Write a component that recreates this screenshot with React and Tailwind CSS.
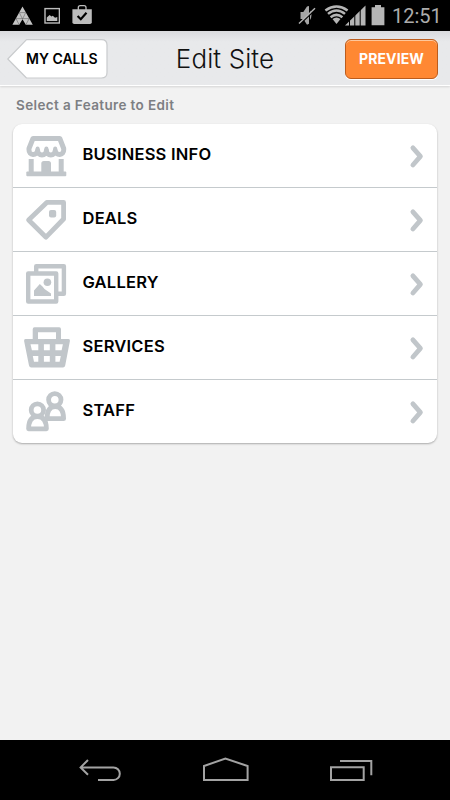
import React from 'react';

const StoreIcon = () => (
  <svg viewBox="0 0 48 48" className="size-12 shrink-0" fill="#c1c6ca">
    <path
      d="M10 6.5H36.8L40.7 16.5V18A4 4 0 0 1 32.2 18.5A4.3 4.3 0 0 1 23.4 18.5A4.3 4.3 0 0 1 14.6 18.5A4 4 0 0 1 6 18V16.5Z"
      fill="none"
      stroke="#c1c6ca"
      strokeWidth="5"
      strokeLinejoin="round"
    />
    <path d="M14.6 16.5v4M23.4 16.5v4M32.2 16.5v4" stroke="#c1c6ca" strokeWidth="4" strokeLinecap="round" />
    <rect x="5.7" y="27" width="5" height="14" />
    <rect x="35.7" y="27" width="5" height="14" />
    <path d="M18.3 41V31.5a2.5 2.5 0 0 1 2.5-2.5h4.7a2.5 2.5 0 0 1 2.5 2.5V41z" />
    <rect x="3.3" y="39.5" width="40" height="4.7" rx="1" />
  </svg>
);

const TagIcon = () => (
  <svg viewBox="0 0 48 48" className="size-12 shrink-0" fill="none" stroke="#c1c6ca" strokeWidth="4.8" strokeLinejoin="round">
    <path d="M5.6 24L23.8 6.4H40.6V23L23 41.2Z" />
    <rect x="26" y="14" width="7.2" height="7.4" rx="2" fill="#c1c6ca" stroke="none" />
  </svg>
);

const GalleryIcon = () => (
  <svg viewBox="0 0 48 48" className="size-12 shrink-0" fill="none" stroke="#c1c6ca" strokeWidth="4.4" strokeLinejoin="round">
    <path d="M13.2 12V6.2H40.9V33.8H35" />
    <rect x="5.2" y="13.5" width="28" height="28" />
    <path d="M11 36V30.5L16.8 24L19.5 26.6L21.5 29L28 33.5V36Z" fill="#c1c6ca" stroke="none" />
    <circle cx="24.4" cy="22.3" r="3.8" fill="#c1c6ca" stroke="none" />
  </svg>
);

const BasketIcon = () => (
  <svg viewBox="0 0 48 48" className="size-12 shrink-0">
    <path
      fillRule="evenodd"
      fill="#c1c6ca"
      d="M11.5 3.3H36.2Q38 3.3 38 5.2V15H45.5Q47.3 15 46.9 17L42.2 41.5Q41.8 43.4 40 43.4H8.2Q6.5 43.4 6 41.5L1.1 17Q.8 15 2.5 15H9.7V5.2Q9.7 3.3 11.5 3.3ZM15 8.3V15H33V8.3ZM7.5 20.3L8.9 26.3H15.3V20.3ZM20.9 20.3V26.3H26.8V20.3ZM32.4 20.3V26.3H38.6L39.9 20.3ZM9.8 32L11 37.8H15.3V32ZM20.9 32V37.8H26.8V32ZM32.4 32V37.8H36.6L37.8 32Z"
    />
  </svg>
);

const StaffIcon = () => (
  <svg viewBox="0 0 48 48" className="size-12 shrink-0" fill="none" stroke="#c1c6ca" strokeWidth="4.8" strokeLinejoin="round">
    <circle cx="31.8" cy="11.8" r="6.2" />
    <path d="M24 30.7Q24 18.6 32.2 18.6Q40.6 18.6 40.6 30.7Z" />
    <circle cx="14.4" cy="22" r="6.2" />
    <path d="M5.6 40.8Q5.6 28.6 14.4 28.6Q23.4 28.6 23.4 40.8Z" />
  </svg>
);

const ChevronIcon = () => (
  <svg viewBox="0 0 16 26" className="h-[26px] w-4" fill="none" stroke="#c1c6ca" strokeWidth="4.8" strokeLinecap="round" strokeLinejoin="round">
    <path d="M3.9 4.8L11.4 13.4L3.9 22" />
  </svg>
);

const features = [
  { label: 'BUSINESS INFO', icon: StoreIcon },
  { label: 'DEALS', icon: TagIcon },
  { label: 'GALLERY', icon: GalleryIcon },
  { label: 'SERVICES', icon: BasketIcon },
  { label: 'STAFF', icon: StaffIcon },
];

const StatusBar = () => (
  <div className="flex h-[31px] shrink-0 justify-between bg-black pr-[9px] pl-3">
    <div className="flex">
      <svg viewBox="0 0 22 31" className="h-[31px] w-[22px]">
        <path d="M10.5 6.5L20.8 24.8H13.8L10.5 19.3L7.2 24.8H.4Z" fill="#c4c4c4" />
        <path d="M7.3 12.6H13.7M4 18.6H17.2M7.3 12.6L10.5 19L13.7 12.6M4 18.6L7.2 24.8M17.2 18.6L13.8 24.8" stroke="#666" strokeWidth=".6" fill="none" />
      </svg>
      <svg viewBox="0 0 16 31" className="ml-[10px] h-[31px] w-4">
        <rect x="1" y="8.6" width="14.4" height="14.4" fill="none" stroke="#bdbdbd" strokeWidth="1.4" />
        <path d="M2.8 21V17.5L5.6 15L7.5 16.5L8.8 15.8L11 17.8L13.3 17V21Z" fill="#bdbdbd" />
      </svg>
      <svg viewBox="0 0 20 31" className="ml-3 h-[31px] w-5">
        <path d="M6.3 10V7.6Q6.3 5.6 8.3 5.6H12Q14 5.6 14 7.6V10" fill="none" stroke="#bdbdbd" strokeWidth="1.3" />
        <path d="M.4 9.3H19.8V22.2Q19.8 24 18 24H2.2Q.4 24 .4 22.2Z" fill="#bdbdbd" />
        <path d="M5.6 16L8.8 19.2L14.5 12.8" fill="none" stroke="#000" strokeWidth="2.2" />
      </svg>
    </div>
    <div className="flex">
      <svg viewBox="0 0 18 31" className="h-[31px] w-[18px]">
        <path d="M2.5 12H5.3L9 6.5L11 6V23.8L9 24.8L5.3 19H2.5ZM12 10.5Q15 15 12 20" fill="#a5a5a5" />
        <path d="M1 24.9L17 10" stroke="#000" strokeWidth="1.3" />
        <path d="M1 23.6L17 8.3" stroke="#b5b5b5" strokeWidth="1.4" />
      </svg>
      <svg viewBox="0 0 42 31" className="ml-2 h-[31px] w-[42px]">
        <path d="M12.5 24L8.5 19Q12.5 16 16.5 19Z" fill="#b5b5b5" />
        <g fill="none" stroke="#b5b5b5" strokeWidth="2.5">
          <path d="M6.6 17.2Q12.5 12.5 18.4 17.2" />
          <path d="M4 13.9Q12.5 7 21 13.9" />
          <path d="M1.4 10.5Q12.5 2.6 23.6 10.5" />
        </g>
        <path d="M21 25.5L41.5 5.5V25.5Z" fill="#b5b5b5" />
        <path d="M25.5 17V26M30.8 12V26M36.2 6V26" stroke="#000" strokeWidth="1" />
      </svg>
      <svg viewBox="0 0 14 31" className="ml-[5px] h-[31px] w-[14px]">
        <path d="M4 5H10V7.3H13.4V25.2H.6V7.3H4Z" fill="#b5b5b5" />
      </svg>
      <span className="ml-[7px] w-[49px] font-['Roboto',sans-serif] text-[20px] leading-[32px] whitespace-nowrap text-[#acacac]">12:51</span>
    </div>
  </div>
);

const Header = () => (
  <header className="flex h-[55px] shrink-0 items-start justify-between border-b border-white bg-linear-to-b from-[#d9dadd] via-[#e8e9eb] via-20% to-[#e8e9eb] pt-2 pr-3 pl-[7px] shadow-[0_1px_2px_rgba(0,0,0,0.12)]">
    <button className="grid h-[40px] w-[101px]">
      <svg viewBox="0 0 101 40" className="col-start-1 row-start-1 h-[40px] w-[101px]">
        <path d="M19.5 .7H94.5Q100 .7 100 6V33.5Q100 39 94.5 39H19.5L.8 20Z" fill="#fff" stroke="#c9cbcd" strokeWidth="1.2" strokeLinejoin="round" />
      </svg>
      <span className="col-start-1 row-start-1 self-center pl-[19px] text-left text-[14px] leading-5 font-semibold whitespace-nowrap text-black">MY CALLS</span>
    </button>
    <h1 className="pt-px pr-[3px] text-[26px] leading-[38px] font-light tracking-[0.1px] text-[#111]">Edit Site</h1>
    <button className="h-[40px] w-[93px] rounded-[6px] border border-[#bb5c1d] bg-[#ff8833] text-[14px] leading-[38px] font-bold tracking-[0.1px] text-white shadow-[inset_0_1px_0_#ffc79b,0_1px_0_#fff]">
      PREVIEW
    </button>
  </header>
);

const NavBar = () => (
  <nav className="flex h-[60px] shrink-0 items-center justify-between bg-black pr-[74px] pl-[76px]">
    <svg viewBox="0 0 48 32" className="h-8 w-12" fill="none" stroke="#a3a3a3" strokeWidth="2">
      <path d="M12 6L4.6 13.4L12 20.8M4.6 13.4H37.5A6.3 6.3 0 0 1 37.5 26H22" />
    </svg>
    <svg viewBox="0 0 48 32" className="h-8 w-12" fill="none" stroke="#a3a3a3" strokeWidth="2">
      <path d="M2 26V12L23.4 4.5L45.6 12V26Z" />
    </svg>
    <svg viewBox="0 0 48 32" className="h-8 w-12" fill="none" stroke="#a3a3a3" strokeWidth="2">
      <path d="M3 13.3H35.7V26H3ZM12 7H43.3V21.3" />
    </svg>
  </nav>
);

const App = () => {
  return (
    <div className="flex h-[800px] w-[450px] flex-col overflow-hidden bg-[#f2f2f2] font-['Inter',sans-serif]">
      <StatusBar />
      <Header />

      <main className="flex-1 px-[13px]">
        <h2 className="pt-[9px] pl-[3px] text-[13.5px] leading-5 font-semibold tracking-[0.37px] text-[#7d7f83]">Select a Feature to Edit</h2>
        <ul className="mt-[9px] h-[319px] overflow-hidden rounded-[9px] bg-white shadow-[0_1px_2px_rgba(0,0,0,0.3)]">
          {features.map(({ label, icon: Icon }) => (
            <li key={label} className="flex h-16 items-start border-b border-[#c5cacd] pt-2 pr-3 pl-[10px] last:border-b-0">
              <Icon />
              <span className="flex-1 pt-[9.5px] pl-[11.5px] text-[16.5px] leading-6 font-semibold tracking-[0.22px] text-black">{label}</span>
              <div className="pt-[11px]">
                <ChevronIcon />
              </div>
            </li>
          ))}
        </ul>
      </main>

      <NavBar />
    </div>
  );
};

export default App;
